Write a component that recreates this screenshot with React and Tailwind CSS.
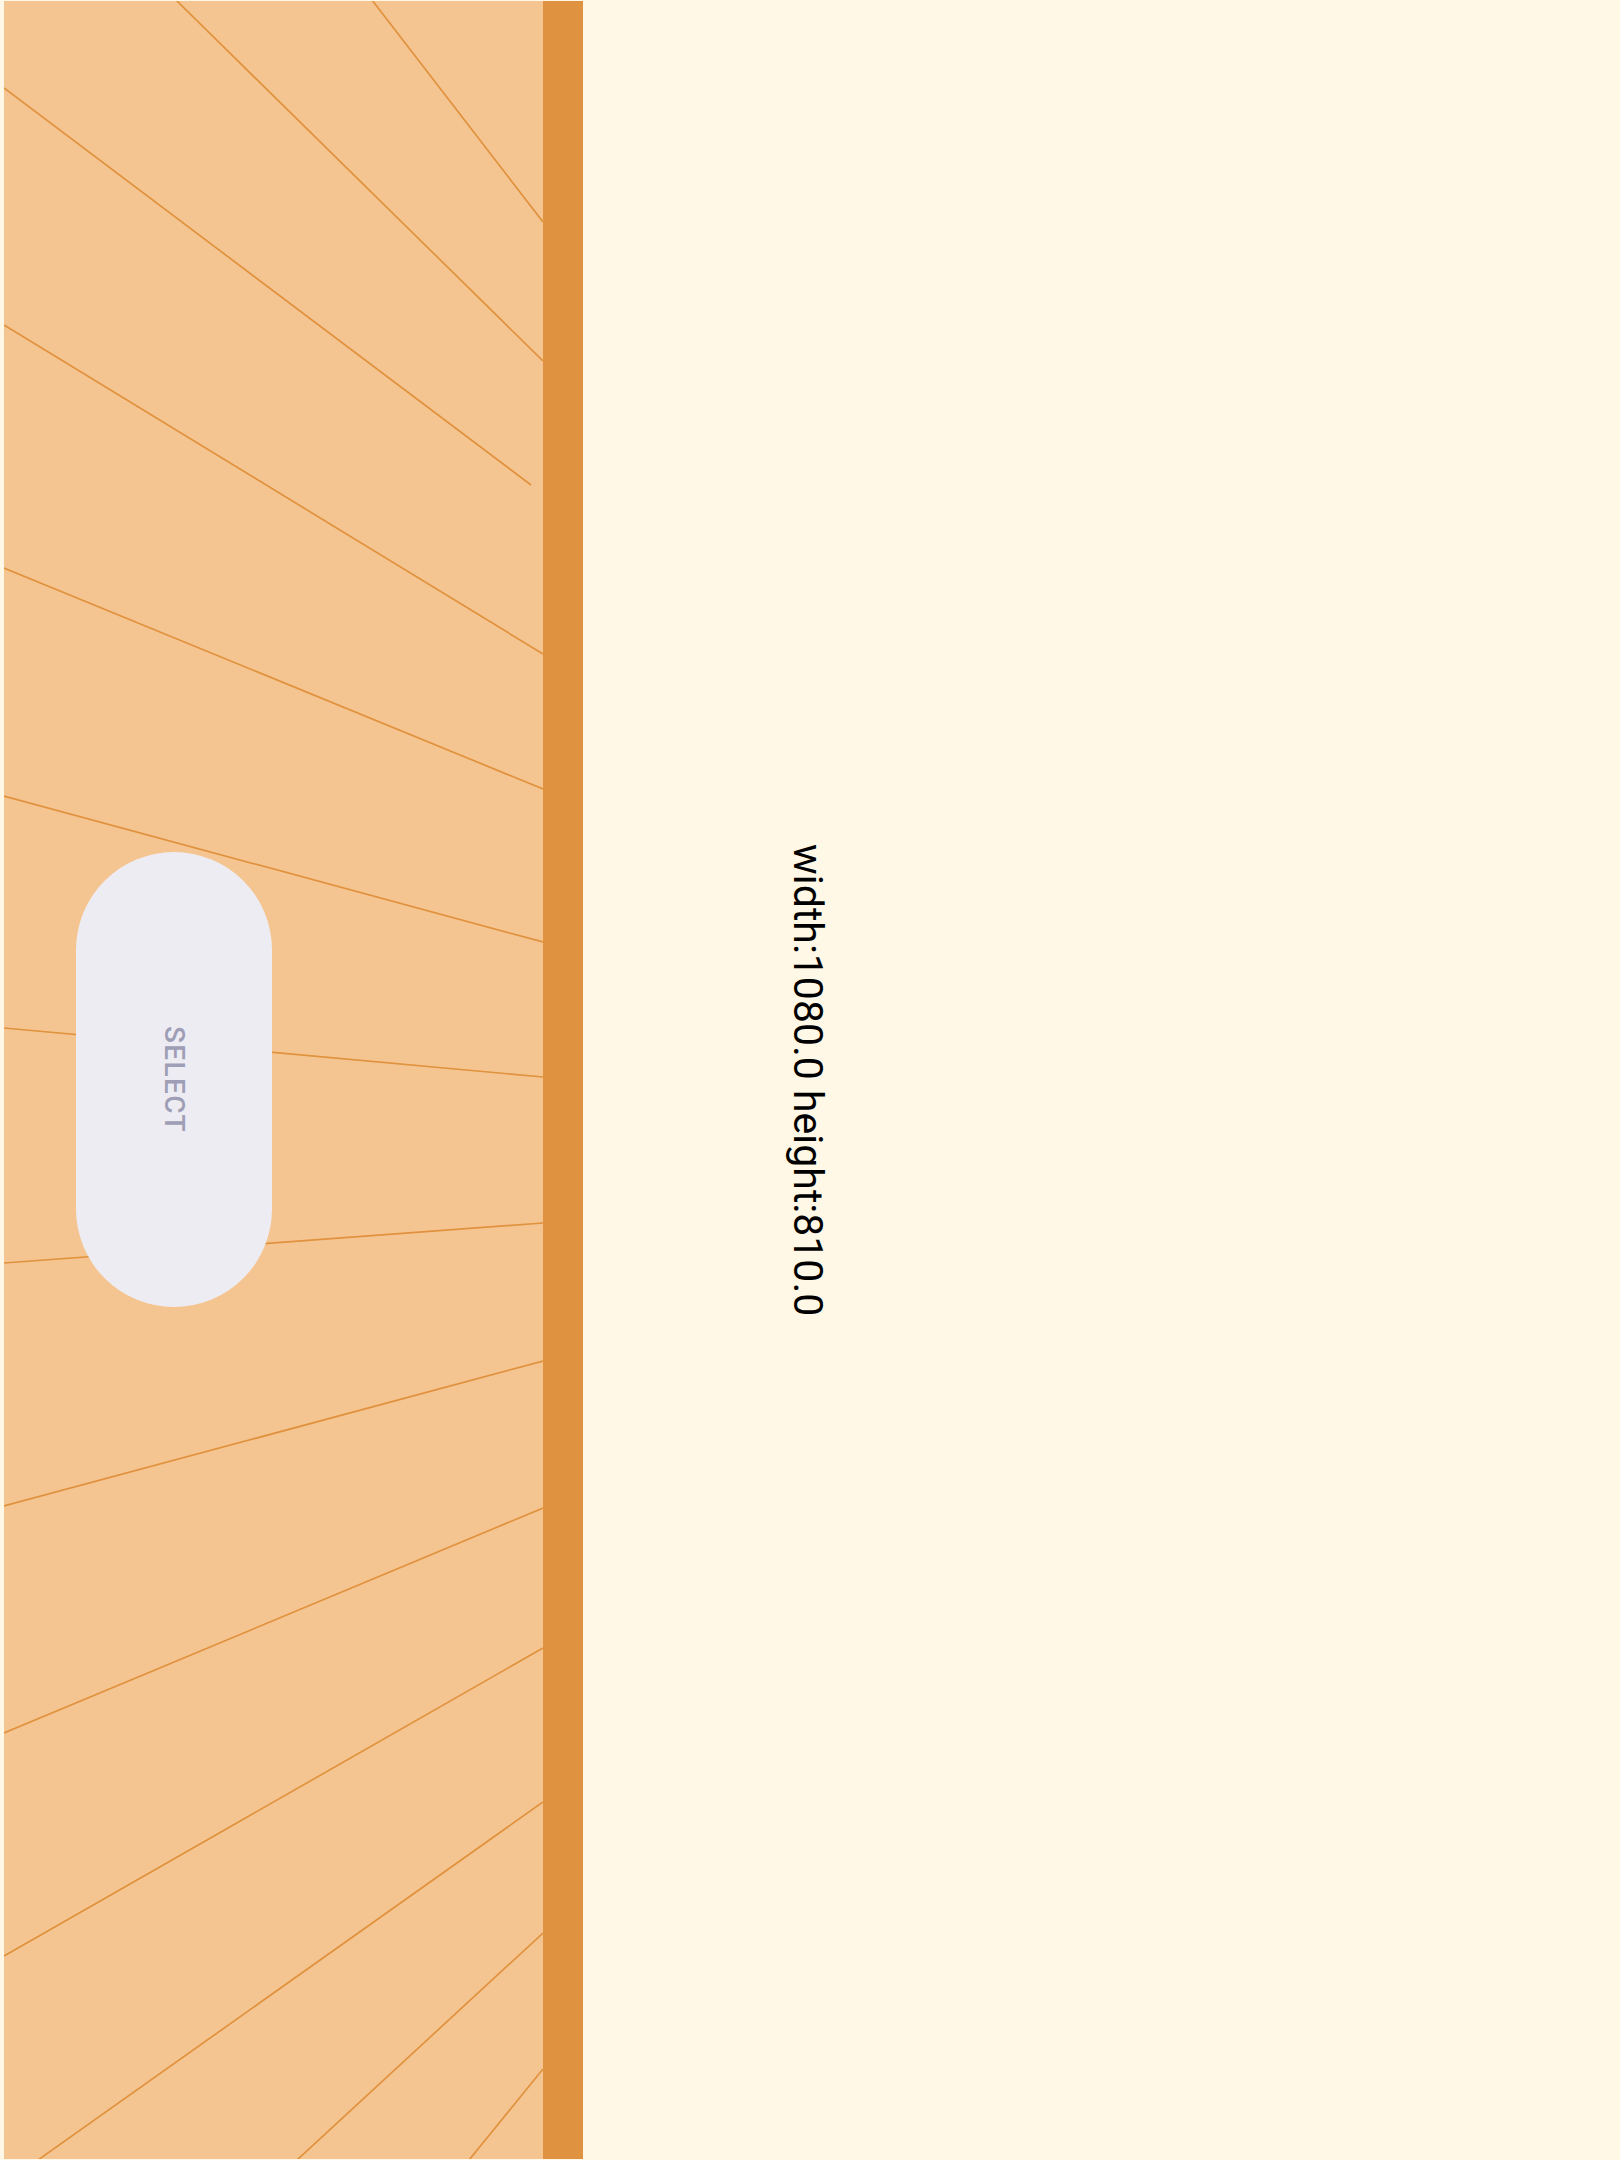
import React from 'react';

// ray lines on the left panel, page coordinates
const rays = [
  [176, 0, 543, 361],
  [372, 0, 543, 222],
  [4, 88, 531, 485],
  [4, 325, 543, 654],
  [4, 568, 543, 789],
  [4, 796, 543, 942],
  [4, 1028, 543, 1077],
  [4, 1263, 543, 1223],
  [4, 1506, 543, 1361],
  [4, 1733, 543, 1508],
  [4, 1956, 543, 1648],
  [38, 2160, 543, 1802],
  [297, 2160, 543, 1933],
  [469, 2160, 543, 2069],
];

const App = () => {
  return (
    <div className="w-[1620px] h-[2160px] bg-[#FFF8E6] flex pl-[4px] py-[1px] overflow-hidden">
      <div className="relative w-[539px] h-full bg-[#F5C591] shrink-0">
        <svg
          className="absolute inset-0"
          width="539"
          height="2158"
          viewBox="4 1 539 2158"
        >
          {rays.map(([x1, y1, x2, y2], i) => (
            <line key={i} x1={x1} y1={y1} x2={x2} y2={y2} stroke="#E0923E" strokeWidth="1.7" />
          ))}
        </svg>
        <div className="relative ml-[72px] pt-[851px]">
          <button className="w-[196px] h-[455px] rounded-full bg-[#EDECF3] flex items-center justify-center">
            <span className="[writing-mode:vertical-rl] font-['Roboto',sans-serif] font-medium text-[28px] leading-none tracking-[0.05em] text-[#9E9EB6]">
              SELECT
            </span>
          </button>
        </div>
      </div>
      <div className="w-[40px] h-full bg-[#DF923F] shrink-0" />
      <div className="flex-1 h-full flex items-center pl-[204px]">
        <span className="[writing-mode:vertical-rl] font-['Roboto',sans-serif] text-[41px] leading-[41px] text-black whitespace-nowrap">
          width:1080.0 height:810.0
        </span>
      </div>
    </div>
  );
};

export default App;
